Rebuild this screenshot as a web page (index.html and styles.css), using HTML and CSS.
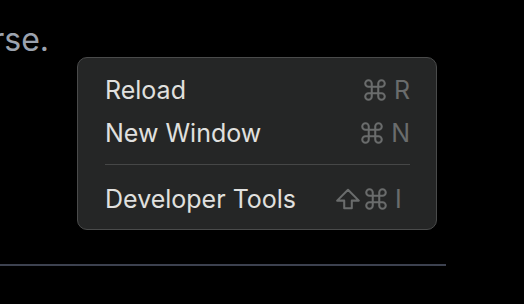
FILE: index.html
```html
<!DOCTYPE html>
<html lang="en">
<head>
    <meta charset="UTF-8">
    <meta name="viewport" content="width=device-width, initial-scale=1.0">
    <title>Context Menu</title>
    <link rel="stylesheet" href="styles.css">
</head>
<body>
    <div class="page">
        <div class="copy-line">
            <p class="copy">the known universe.</p>
        </div>
        <div class="rule"></div>

        <div class="menu" role="menu">
            <div class="menu-item" role="menuitem">
                <span class="label">Reload</span>
                <span class="keys">
                    <svg class="key-icon" viewBox="0 0 24 24"><path d="M15 6v12a3 3 0 1 0 3-3H6a3 3 0 1 0 3 3V6a3 3 0 1 0-3 3h12a3 3 0 1 0-3-3"/></svg>
                    <span class="key">R</span>
                </span>
            </div>
            <div class="menu-item" role="menuitem">
                <span class="label">New Window</span>
                <span class="keys">
                    <svg class="key-icon" viewBox="0 0 24 24"><path d="M15 6v12a3 3 0 1 0 3-3H6a3 3 0 1 0 3 3V6a3 3 0 1 0-3 3h12a3 3 0 1 0-3-3"/></svg>
                    <span class="key">N</span>
                </span>
            </div>
            <div class="separator"></div>
            <div class="menu-item" role="menuitem">
                <span class="label">Developer Tools</span>
                <span class="keys">
                    <svg class="key-icon" viewBox="0 0 24 24"><path d="M8.5 20.5v-7H2L12 3.5l10 10h-6.5v7z"/></svg>
                    <svg class="key-icon" viewBox="0 0 24 24"><path d="M15 6v12a3 3 0 1 0 3-3H6a3 3 0 1 0 3 3V6a3 3 0 1 0-3 3h12a3 3 0 1 0-3-3"/></svg>
                    <span class="key">I</span>
                </span>
            </div>
        </div>
    </div>
</body>
</html>
```

FILE: styles.css
```css
body {
    margin: 0;
    background-color: #000;
    font-family: Inter, "Noto Sans", sans-serif;
}
.page {
    position: relative;
    height: 304px;
    overflow: hidden;
}
.copy-line {
    display: flex;
    justify-content: flex-end;
    width: 49px;
    overflow: hidden;
    padding-top: 20px;
}
.copy {
    margin: 0;
    white-space: nowrap;
    font-size: 32px;
    line-height: 40px;
    color: #9ca3af;
}
.rule {
    width: 446px;
    height: 2px;
    margin-top: 204px;
    background-color: #3d4250;
}
.menu {
    position: absolute;
    left: 77px;
    top: 57px;
    box-sizing: border-box;
    width: 360px;
    padding: 10px 26px 9px 27px;
    background-color: #252626;
    border: 1px solid #4a4b4b;
    border-radius: 10px;
    box-shadow: 0 8px 24px rgba(0,0,0,0.5);
}
.menu-item {
    display: flex;
    align-items: center;
    justify-content: space-between;
    height: 43px;
    font-size: 25px;
    color: #e0e0df;
}
.keys {
    display: flex;
    align-items: center;
    gap: 2px;
    color: #6a6c6c;
}
.key-icon {
    width: 26px;
    height: 26px;
    fill: none;
    stroke: #6a6c6c;
    stroke-width: 1.9;
    stroke-linejoin: round;
    stroke-linecap: round;
}
.key {
    min-width: 15px;
    margin-left: 4px;
}
.separator {
    height: 1px;
    margin: 10px 0 12px;
    background-color: #464747;
}
```
